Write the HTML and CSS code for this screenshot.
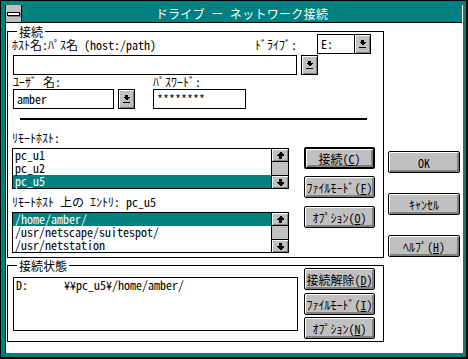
FILE: index.html
```html
<!DOCTYPE html>
<html>
  <head>
    <meta charset="utf-8">
    <title>ドライブ - ネットワーク接続</title>
    <link rel="stylesheet" href="styles.css">
  </head>
  <body>
    <div class="frame">
      <div class="window">
        <div class="titlebar">
          <div class="sysmenu"><span class="dash"></span></div>
          <div class="title">ドライブ ー ネットワーク接続</div>
        </div>

        <div class="client">
          <div class="main">
            <div class="group group-conn">
              <span class="legend">接続</span>

              <div class="row-host">
                <span class="label host-label">ﾎｽﾄ名:ﾊﾟｽ名 (host:/path)</span>
                <span class="label">ﾄﾞﾗｲﾌﾞ:</span>
                <div class="combo drive">
                  <div class="field drive-field">E:</div>
                  <div class="drop joined">
                    <svg width="7" height="9" viewBox="0 0 7 9" shape-rendering="crispEdges"><path d="M2 0h3v2h2l-3 3h-1l-3-3h2z M0 7h7v1H0z"/></svg>
                  </div>
                </div>
              </div>

              <div class="row-path">
                <div class="field path-field"></div>
                <div class="drop">
                  <svg width="7" height="9" viewBox="0 0 7 9" shape-rendering="crispEdges"><path d="M2 0h3v2h2l-3 3h-1l-3-3h2z M0 7h7v1H0z"/></svg>
                </div>
              </div>

              <div class="row-user">
                <div class="user">
                  <div class="label small-label">ﾕｰｻﾞ 名:</div>
                  <div class="combo">
                    <div class="field user-field">amber</div>
                    <div class="drop">
                      <svg width="7" height="9" viewBox="0 0 7 9" shape-rendering="crispEdges"><path d="M2 0h3v2h2l-3 3h-1l-3-3h2z M0 7h7v1H0z"/></svg>
                    </div>
                  </div>
                </div>
                <div class="pass">
                  <div class="label small-label">ﾊﾟｽﾜｰﾄﾞ:</div>
                  <div class="field pass-field">********</div>
                </div>
              </div>

              <div class="rule"></div>

              <div class="row-remote">
                <div class="lists">
                  <div class="label list-label">ﾘﾓｰﾄﾎｽﾄ:</div>
                  <div class="listbox">
                    <div class="items">
                      <div class="item">pc_u1</div>
                      <div class="item">pc_u2</div>
                      <div class="item selected">pc_u5</div>
                    </div>
                    <div class="scrollbar">
                      <div class="arrow up"><svg width="7" height="7" viewBox="0 0 7 7" shape-rendering="crispEdges"><path d="M3 0h1l3 3v1H5v3H2V4H0V3z"/></svg></div>
                      <div class="track"></div>
                      <div class="arrow down"><svg width="7" height="7" viewBox="0 0 7 7" shape-rendering="crispEdges"><path d="M2 0h3v3h2v1l-3 3H3L0 4V3h2z"/></svg></div>
                    </div>
                  </div>

                  <div class="label list-label second">ﾘﾓｰﾄﾎｽﾄ 上の ｴﾝﾄﾘ: pc_u5</div>
                  <div class="listbox">
                    <div class="items">
                      <div class="item selected">/home/amber/</div>
                      <div class="item">/usr/netscape/suitespot/</div>
                      <div class="item">/usr/netstation</div>
                    </div>
                    <div class="scrollbar">
                      <div class="arrow up"><svg width="7" height="7" viewBox="0 0 7 7" shape-rendering="crispEdges"><path d="M3 0h1l3 3v1H5v3H2V4H0V3z"/></svg></div>
                      <div class="track"></div>
                      <div class="arrow down"><svg width="7" height="7" viewBox="0 0 7 7" shape-rendering="crispEdges"><path d="M2 0h3v3h2v1l-3 3H3L0 4V3h2z"/></svg></div>
                    </div>
                  </div>
                </div>

                <div class="buttons conn-buttons">
                  <div class="btn default">接続(<u>C</u>)</div>
                  <div class="btn">ﾌｧｲﾙﾓｰﾄﾞ(<u>F</u>)</div>
                  <div class="btn">ｵﾌﾟｼｮﾝ(<u>O</u>)</div>
                </div>
              </div>
            </div>

            <div class="group group-state">
              <span class="legend">接続状態</span>
              <div class="row-state">
                <div class="state-list">
                  <div class="item"><span class="drive-col">D:</span>¥¥pc_u5¥/home/amber/</div>
                </div>
                <div class="buttons state-buttons">
                  <div class="btn">接続解除(<u>D</u>)</div>
                  <div class="btn">ﾌｧｲﾙﾓｰﾄﾞ(<u>I</u>)</div>
                  <div class="btn">ｵﾌﾟｼｮﾝ(<u>N</u>)</div>
                </div>
              </div>
            </div>
          </div>

          <div class="side">
            <div class="btn">OK</div>
            <div class="btn">ｷｬﾝｾﾙ</div>
            <div class="btn">ﾍﾙﾌﾟ(<u>H</u>)</div>
          </div>
        </div>
      </div>
    </div>
  </body>
</html>
```

FILE: styles.css
```css
body {
  margin: 0;
  overflow: hidden;
  font-family: "Noto Sans Mono CJK JP", "Noto Sans CJK JP", monospace;
  font-size: 12px;
  line-height: 13px;
  color: #000;
}

/* window frame */
.frame {
  width: 468px;
  height: 359px;
  box-sizing: border-box;
  background: #008080;
  border: solid #000;
  border-width: 1px 2px 2px 1px;
  padding: 4px 3px 4px 4px;
}
.window {
  height: 100%;
  border-left: 1px solid #000;
  border-right: 1px solid #fff;
  display: flex;
  flex-direction: column;
}
.titlebar {
  height: 17px;
  display: flex;
  background: #008080;
  border-bottom: 1px solid #000;
}
.sysmenu {
  width: 15px;
  background: #c0c0c0;
  border-right: 1px solid #000;
  display: flex;
  align-items: center;
  justify-content: center;
}
.dash {
  width: 11px;
  height: 2px;
  background: #fff;
  border: 1px solid #000;
  box-shadow: 1px 1px #808080;
}
.title {
  flex: 1;
  color: #fff;
  text-align: center;
  line-height: 17px;
  font-size: 12px;
  letter-spacing: 0.3px;
}

/* client */
.client {
  flex: 1;
  background: #fff;
  display: flex;
  padding-left: 1px;
}
.main {
  width: 377px;
}
.side {
  width: 72px;
  margin-left: 4px;
  padding-top: 128px;
  display: flex;
  flex-direction: column;
  gap: 20px;
}

.group {
  border: 1px solid #000;
  padding: 0 8px 0 4px;
}
.group-conn {
  margin-top: 8px;
  padding-bottom: 4px;
}
.group-state {
  margin-top: 7px;
  padding-bottom: 2px;
}
.legend {
  display: table;
  margin: -6px 0 -3px 5px;
  padding: 0 2px;
  height: 11px;
  line-height: 11px;
  background: #fff;
}

.label {
  white-space: pre;
}

.row-host {
  display: flex;
  align-items: center;
  height: 20px;
}
.host-label {
  flex: 1;
}
.combo {
  display: flex;
}
.drive {
  margin: 0 4px 0 20px;
}

.field {
  height: 20px;
  box-sizing: border-box;
  border: 1px solid #000;
  padding: 0 3px;
  line-height: 18px;
  background: #fff;
  white-space: pre;
}
.drive-field {
  width: 38px;
}
.path-field {
  width: 284px;
}
.user-field {
  width: 101px;
}
.pass-field {
  width: 93px;
}

.drop {
  width: 17px;
  height: 20px;
  box-sizing: border-box;
  margin-left: 4px;
  border: 1px solid #000;
  background: #c0c0c0;
  box-shadow: inset 1px 1px #fff, inset -1px -1px #808080;
  display: flex;
  align-items: center;
  justify-content: center;
}
.drop.joined {
  width: 17px;
  margin-left: -1px;
}

.row-path {
  display: flex;
  margin: 1px 0 0 1px;
}

.row-user {
  display: flex;
  margin-left: 1px;
}
.small-label {
  height: 14px;
  line-height: 13px;
}
.pass {
  margin-left: 18px;
}

.rule {
  height: 2px;
  background: #000;
  margin: 9px 8px 0 8px;
}

.row-remote {
  display: flex;
}
.lists {
  width: 277px;
}
.list-label {
  height: 14px;
  line-height: 14px;
  margin: 11px 0 3px;
}
.list-label.second {
  margin-top: 6px;
}

.listbox {
  display: flex;
  border: 1px solid #000;
}
.items {
  flex: 1;
}
.item {
  height: 13px;
  line-height: 12px;
  padding-left: 2px;
  white-space: pre;
}
.item.selected {
  background: #008080;
  color: #fff;
}
.scrollbar {
  width: 16px;
  border-left: 1px solid #000;
  display: flex;
  flex-direction: column;
}
.arrow {
  height: 12px;
  background: #c0c0c0;
  box-shadow: inset 1px 1px #fff, inset -1px -1px #808080;
  display: flex;
  align-items: center;
  justify-content: center;
}
.arrow.up {
  border-bottom: 1px solid #000;
}
.arrow.down {
  border-top: 1px solid #000;
}
.track {
  flex: 1;
  background: #c0c0c0;
}

.buttons {
  width: 71px;
  display: flex;
  flex-direction: column;
}
.conn-buttons {
  margin-left: 15px;
  padding-top: 27px;
}
.conn-buttons .btn + .btn {
  margin-top: 7px;
}
.conn-buttons .btn:last-child {
  margin-top: 8px;
}

.row-state {
  display: flex;
}
.state-list {
  flex: 1;
  height: 54px;
  box-sizing: border-box;
  margin: 9px 6px 0 1px;
  border: 1px solid #000;
  padding-top: 1px;
}
.drive-col {
  display: inline-block;
  width: 48px;
}
.state-buttons .btn + .btn {
  margin-top: 3px;
}
.state-buttons .btn:last-child {
  margin-top: 2px;
}

.btn {
  height: 22px;
  box-sizing: border-box;
  border: 1px solid #000;
  border-radius: 2px;
  background: #c0c0c0;
  box-shadow: inset 1px 1px #fff, inset -2px -2px #808080;
  display: flex;
  align-items: center;
  justify-content: center;
  white-space: pre;
}
.btn.default {
  border-width: 2px;
}
```
